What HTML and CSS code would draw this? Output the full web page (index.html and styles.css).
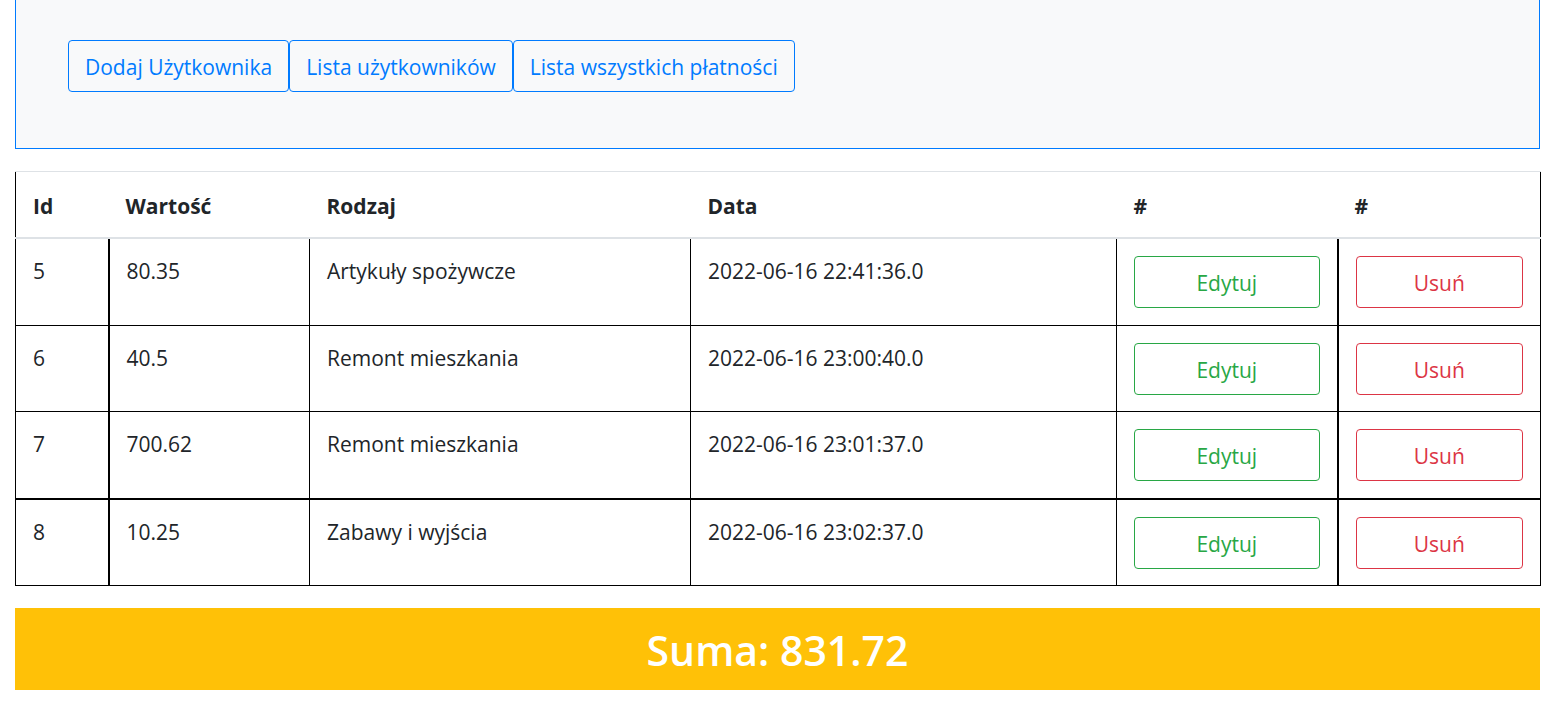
FILE: index.html
```html
<!DOCTYPE html>
<html lang="pl">
<head>
<meta charset="utf-8">
<title>Płatności</title>
<link rel="stylesheet" href="styles.css">
</head>
<body>
<div class="page">
  <nav class="menu">
    <div class="menu-buttons"><a class="btn btn-primary-outline" href="#">Dodaj Użytkownika</a><a class="btn btn-primary-outline" href="#">Lista użytkowników</a><a class="btn btn-primary-outline" href="#">Lista wszystkich płatności</a></div>
  </nav>

  <table class="payments">
    <colgroup>
      <col class="c-id"><col class="c-val"><col class="c-kind"><col class="c-date"><col class="c-edit"><col class="c-del">
    </colgroup>
    <thead>
      <tr><th>Id</th><th>Wartość</th><th>Rodzaj</th><th>Data</th><th>#</th><th>#</th></tr>
    </thead>
    <tbody>
      <tr>
        <td class="col-id">5</td><td>80.35</td><td>Artykuły spożywcze</td><td>2022-06-16 22:41:36.0</td>
        <td class="col-edit"><a class="btn btn-block btn-success-outline" href="#">Edytuj</a></td>
        <td><a class="btn btn-block btn-danger-outline" href="#">Usuń</a></td>
      </tr>
      <tr>
        <td class="col-id">6</td><td>40.5</td><td>Remont mieszkania</td><td>2022-06-16 23:00:40.0</td>
        <td class="col-edit"><a class="btn btn-block btn-success-outline" href="#">Edytuj</a></td>
        <td><a class="btn btn-block btn-danger-outline" href="#">Usuń</a></td>
      </tr>
      <tr class="row-thick">
        <td class="col-id">7</td><td>700.62</td><td>Remont mieszkania</td><td>2022-06-16 23:01:37.0</td>
        <td class="col-edit"><a class="btn btn-block btn-success-outline" href="#">Edytuj</a></td>
        <td><a class="btn btn-block btn-danger-outline" href="#">Usuń</a></td>
      </tr>
      <tr>
        <td class="col-id">8</td><td>10.25</td><td>Zabawy i wyjścia</td><td>2022-06-16 23:02:37.0</td>
        <td class="col-edit"><a class="btn btn-block btn-success-outline" href="#">Edytuj</a></td>
        <td><a class="btn btn-block btn-danger-outline" href="#">Usuń</a></td>
      </tr>
    </tbody>
  </table>

  <div class="sum">Suma: 831.72</div>
</div>
</body>
</html>
```

FILE: styles.css
```css
* { box-sizing: border-box; }

html, body {
  margin: 0;
  background: #fff;
}

body {
  font-family: "Open Sans", "Noto Sans", sans-serif;
  font-size: 21px;
  line-height: 30px;
  color: #212529;
}

.page {
  width: 1525px;
  margin-left: 15px;
}

.menu {
  height: 149px;
  background: #f8f9fa;
  border: 1px solid #007bff;
  border-top: none;
  padding: 40px 0 0 52px;
}

.menu-buttons {
  display: flex;
}

.btn {
  display: inline-block;
  text-decoration: none;
  font-size: 21px;
  line-height: 30px;
  padding: 11px 16px 9px;
  border: 1px solid transparent;
  border-radius: 4px;
  text-align: center;
  background: transparent;
  white-space: nowrap;
}

.btn-primary-outline { color: #007bff; border-color: #007bff; }
.btn-success-outline { color: #28a745; border-color: #28a745; }
.btn-danger-outline  { color: #dc3545; border-color: #dc3545; }

.btn-block { display: block; width: 100%; }

.payments {
  margin-top: 22px;
  width: 1525px;
  border-collapse: collapse;
  table-layout: fixed;
  border-left: 1px solid #000;
  border-right: 1px solid #000;
}

.c-id   { width: 93px; }
.c-val  { width: 201px; }
.c-kind { width: 381px; }
.c-date { width: 426px; }
.c-edit { width: 221px; }
.c-del  { width: 203px; }

.payments th {
  text-align: left;
  font-weight: 700;
  padding: 19px 17px 16px;
  border-top: 1px solid #dee2e6;
  border-bottom: 2px solid #dee2e6;
  vertical-align: bottom;
}

.payments td {
  padding: 17px 17px 16.5px;
  border: 1px solid #000;
  vertical-align: top;
}

.payments td.col-id { border-right-width: 2px; }
.payments td.col-edit { border-right-width: 2px; }
.payments tr.row-thick td { border-bottom-width: 2px; }

.sum {
  margin-top: 22px;
  height: 82px;
  background: #ffc107;
  color: #fff;
  font-weight: 600;
  font-size: 41px;
  line-height: 84px;
  text-align: center;
}
```
